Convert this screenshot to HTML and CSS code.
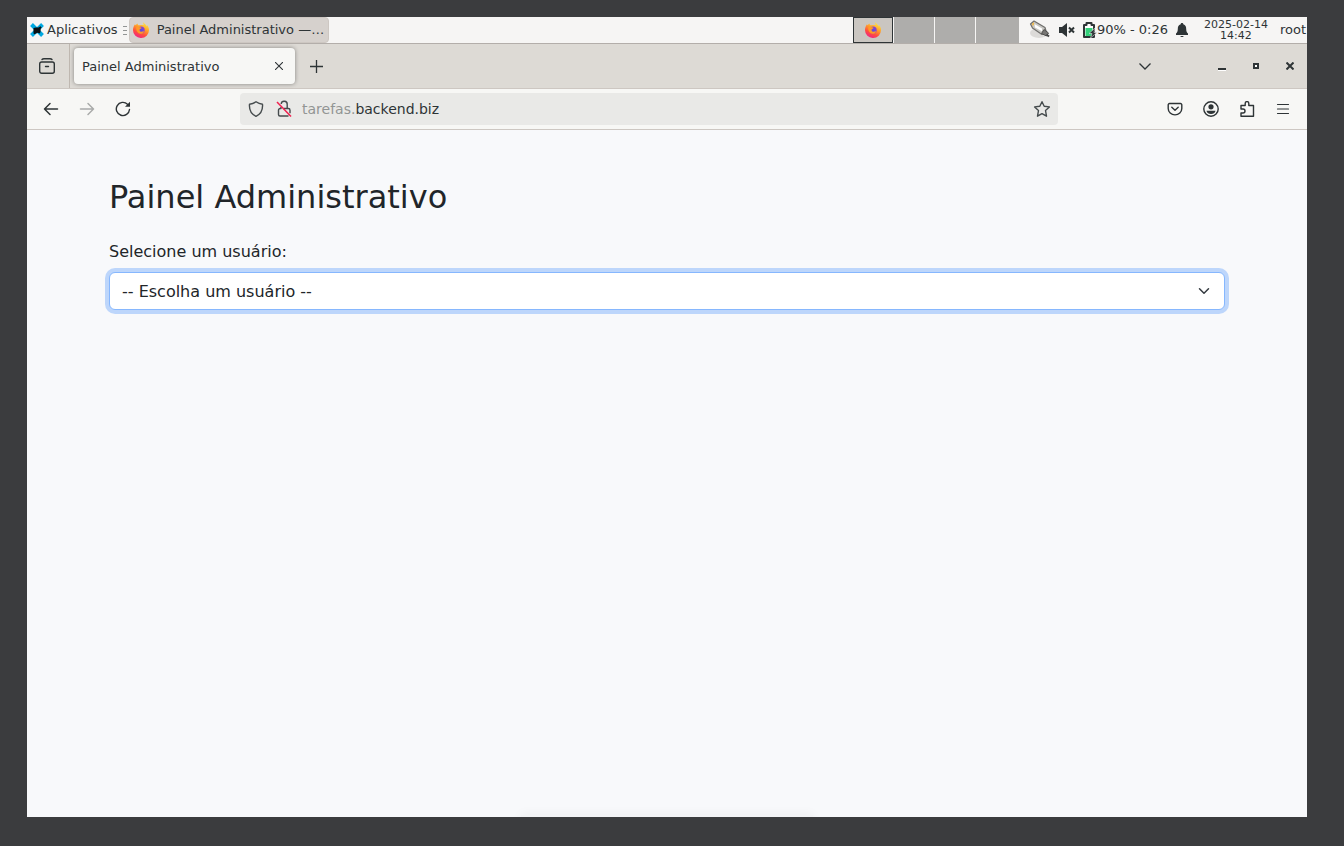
FILE: index.html
```html
<!DOCTYPE html>
<html lang="pt-BR">
<head>
<meta charset="utf-8">
<meta name="viewport" content="width=device-width, initial-scale=1">
<title>Painel Administrativo</title>
<link rel="stylesheet" href="styles.css">
</head>
<body>
<svg class="defs" width="0" height="0" aria-hidden="true">
  <defs>
    <linearGradient id="fx-body" x1="0.8" y1="0" x2="0.3" y2="1">
      <stop offset="0" stop-color="#fff04a"/>
      <stop offset="0.4" stop-color="#ffa02a"/>
      <stop offset="0.7" stop-color="#ff4f3e"/>
      <stop offset="1" stop-color="#f0208a"/>
    </linearGradient>
    <radialGradient id="fx-core">
      <stop offset="0" stop-color="#5b4be0"/>
      <stop offset="1" stop-color="#8f45c8"/>
    </radialGradient>
    <symbol id="firefox" viewBox="0 0 16 16">
      <path fill="url(#fx-body)" d="M10.2.2c-.3 1 .1 1.800 .8 2.500L8 3 5.500 3.300C4.800 3 4.500 2.400 4.500 1.500c-.8.4-1.300 1-1.700 1.700-.4-.2-.7-.5-.8-1C.8 3.800 0 6 0 8.200A7.800 7.800 0 0 0 8 16a7.900 7.900 0 0 0 8-8c0-1.900-.8-3.800-2-4.900.1.500.1.900 0 1.300C13.200 2.700 11.300 1.700 10.200.2z"/>
      <circle cx="8.200" cy="8" r="3.500" fill="url(#fx-core)"/>
      <path fill="#ff9a26" d="M3.200 5.200c1.300-.8 2.600-.6 3.600 0 .8.1 1.500.2 1.700.7-.2.700-1.500.8-1.900 1.500-.3 1.400.7 2.300 2 2.300 1 0 1.700-.5 2.400-.3-.6 1.600-2 2.500-3.600 2.300C4.800 11.400 3 9 3.200 5.200z"/>
    </symbol>
  </defs>
</svg>

<div class="screen">
  <header class="panel">
    <button class="panel-menu" type="button">
      <svg width="14" height="14" viewBox="0 0 14 14" aria-hidden="true"><path d="M1.500 1.500l11 11M12.500 1.500l-11 11" stroke="#00a8e0" stroke-width="4"/><path d="M3.500 5l2.200-.4L8.500 4.500l2-1.200 1.200 1.400-1 .8-.2 3-.5 2-2.500-.8-3 1.500-1-.7z" fill="#0b1013"/></svg>
      <span class="panel-text">Aplicativos</span>
    </button>
    <span class="panel-grip"></span>
    <button class="panel-task" type="button">
      <svg width="16" height="16" aria-hidden="true"><use href="#firefox"/></svg>
      <span class="panel-text">Painel Administrativo —…</span>
    </button>
    <div class="workspaces">
      <button class="workspace workspace-current" type="button" aria-label="Espaço de trabalho 1"><svg width="16" height="16" aria-hidden="true"><use href="#firefox"/></svg></button>
      <button class="workspace" type="button" aria-label="Espaço de trabalho 2"></button>
      <button class="workspace" type="button" aria-label="Espaço de trabalho 3"></button>
      <button class="workspace workspace-last" type="button" aria-label="Espaço de trabalho 4"></button>
    </div>
    <div class="tray">
      <svg width="22" height="20" viewBox="0 0 22 20" aria-hidden="true"><ellipse cx="10" cy="13" rx="9" ry="5" fill="#dcdad8"/><path d="M1.500 4L5 1l11 6.500 1 3.500-4 3.500L3.500 8z" fill="#c9c8c4" stroke="#6f6e6c" stroke-width="1.200" stroke-linejoin="round"/><path d="M5.500 4L13 8.500v2.800L6 7.500z" fill="#fff"/><path d="M3 3.500l2-1.300v2.600L3.500 6z" fill="#efb94c"/><path d="M15 9.500l4.500 3.500-2 3-5-2.500z" fill="#777674" stroke="#4f4e4c"/><path d="M17.500 14.500l2.500 2" stroke="#444" stroke-width="2"/></svg>
      <svg class="tray-sound" width="16" height="16" viewBox="0 0 16 16" aria-hidden="true"><path d="M0 5h3l5-4v14l-5-4H0z" fill="#2e3436"/><path d="M10 5.500l5 5M15 5.500l-5 5" stroke="#2e3436" stroke-width="2"/></svg>
      <svg class="tray-battery" width="14" height="16" viewBox="0 0 14 16" aria-hidden="true"><path d="M1 3h2.500V1h5v2H11v12H1z" fill="#fff" stroke="#2e3436" stroke-width="2" stroke-linejoin="round"/><path d="M2.500 6h7v8h-7z" fill="#33d17a"/><path d="M12 6L6 11.500h3l-1.500 4.500L14 10.500h-3z" fill="#2e3436" stroke="#f6f5f4" stroke-width=".5"/></svg>
      <span class="panel-text tray-power">90% - 0:26</span>
      <svg class="tray-bell" width="12" height="14" viewBox="0 0 12 14" aria-hidden="true"><path d="M6 0c.8 0 1.300.5 1.300 1.200C9.500 1.800 10.200 3.500 10.200 6c0 2.500.6 3.500 1.800 4.500V12H0v-1.500C1.200 9.500 1.800 8.500 1.800 6c0-2.500.7-4.200 2.900-4.800C4.700.5 5.200 0 6 0zM4 13h4l-2 1.500z" fill="#2e3436"/></svg>
      <time class="tray-clock" datetime="2025-02-14T14:42"><span>2025-02-14</span><span>14:42</span></time>
      <span class="panel-text">root</span>
    </div>
  </header>

  <div class="tabbar">
    <button class="tabbar-view" type="button" aria-label="Visão do Firefox"><svg width="16" height="16" viewBox="0 0 16 16" fill="none" stroke="#2e3436" stroke-width="1.400" stroke-linecap="round" aria-hidden="true"><path d="M3 1.500c.5-.6 1-.8 2-.8h6c1 0 1.500.2 2 .8"/><rect x=".7" y="4" width="14.600" height="11.300" rx="2"/><path d="M6.500 8.500h3"/></svg></button>
    <div class="tab">
      <span>Painel Administrativo</span>
      <button type="button" aria-label="Fechar aba"><svg width="8" height="8" viewBox="0 0 8 8" stroke="#2e3436" stroke-width="1.100" aria-hidden="true"><path d="M0 0l8 8M8 0L0 8"/></svg></button>
    </div>
    <button class="tab-new" type="button" aria-label="Nova aba"><svg width="13" height="13" viewBox="0 0 13 13" stroke="#2e3436" stroke-width="1.300" aria-hidden="true"><path d="M6.500 0v13M0 6.500h13"/></svg></button>
    <button class="tabs-all" type="button" aria-label="Listar abas"><svg width="12" height="7" viewBox="0 0 12 7" fill="none" stroke="#2e3436" stroke-width="1.300" aria-hidden="true"><path d="M.5.5L6 6 11.500.5"/></svg></button>
    <div class="window-controls">
      <button type="button" aria-label="Minimizar"><svg width="8" height="9" viewBox="0 0 8 9" aria-hidden="true"><path d="M0 6h8v2H0z" fill="#2e3436"/><path d="M0 8.500h8" stroke="#fff"/></svg></button>
      <button type="button" aria-label="Maximizar"><svg width="6" height="6" viewBox="0 0 6 6" aria-hidden="true"><path d="M1 1h4v4H1z" fill="#fff" stroke="#2e3436" stroke-width="2"/></svg></button>
      <button type="button" aria-label="Fechar"><svg width="8" height="8" viewBox="0 0 8 8" stroke="#2e3436" stroke-width="2" aria-hidden="true"><path d="M.5.5l7 7M7.500.5l-7 7"/></svg></button>
    </div>
  </div>

  <nav class="toolbar" aria-label="Navegação">
    <div class="toolbar-nav">
      <button type="button" aria-label="Voltar"><svg width="16" height="16" viewBox="0 0 16 16" fill="none" stroke="#2e3436" stroke-width="1.500" stroke-linecap="round" stroke-linejoin="round" aria-hidden="true"><path d="M14.500 8h-13M7 2.500L1.500 8 7 13.500"/></svg></button>
      <button type="button" aria-label="Avançar" disabled><svg width="16" height="16" viewBox="0 0 16 16" fill="none" stroke="#a9abaa" stroke-width="1.500" stroke-linecap="round" stroke-linejoin="round" aria-hidden="true"><path d="M1.500 8h13M9 2.500L14.500 8 9 13.500"/></svg></button>
      <button type="button" aria-label="Recarregar"><svg width="16" height="16" viewBox="0 0 16 16" fill="none" stroke="#2e3436" stroke-width="1.400" stroke-linecap="round" aria-hidden="true"><path d="M14.500 8.500A6.600 6.600 0 1 1 12.500 3.200"/><path d="M15 .8v5h-5z" fill="#2e3436" stroke="none"/></svg></button>
    </div>
    <div class="urlbar">
      <svg width="16" height="16" viewBox="0 0 16 16" fill="none" stroke="#454b4d" stroke-width="1.400" stroke-linejoin="round" aria-hidden="true"><path d="M8 .8c2 1.500 4.200 2.300 6.500 2.400.5 6-1.500 9.800-6.500 12.100C3 13 1 9.200 1.500 3.200 3.800 3.100 6 2.300 8 .8z"/></svg>
      <svg class="urlbar-lock" width="16" height="18" viewBox="0 0 16 18" fill="none" stroke="#454b4d" stroke-width="1.400" stroke-linejoin="round" aria-hidden="true"><path d="M5.200 4a3 3 0 0 1 6 .5v4M7.500 8.500h4.800a1.700 1.700 0 0 1 1.700 1.700v3M12.500 16H4a1.500 1.500 0 0 1-1.500-1.500v-4.300a1.700 1.700 0 0 1 1.700-1.700H5V7"/><path d="M1 2l14 14.500" stroke="#f0204e" stroke-width="1.500"/></svg>
      <a class="urlbar-address" href="#"><span class="urlbar-sub">tarefas.</span>backend.biz</a>
      <button type="button" aria-label="Adicionar aos favoritos"><svg width="18" height="18" viewBox="0 0 18 18" fill="none" stroke="#454b4d" stroke-width="1.400" stroke-linejoin="round" aria-hidden="true"><path d="M9 1.700l2.200 4.600 5.200.6-3.900 3.600 1 5.700L9 13.600l-4.500 2.600 1-5.700L1.600 6.900l5.200-.6z"/></svg></button>
    </div>
    <div class="toolbar-actions">
      <button type="button" aria-label="Pocket"><svg width="16" height="16" viewBox="0 0 16 16" fill="none" stroke="#2e3436" stroke-width="1.400" stroke-linecap="round" stroke-linejoin="round" aria-hidden="true"><path d="M2.500 2.500h11a1.300 1.300 0 0 1 1.300 1.300v3.700a6.800 6.400 0 0 1-13.600 0V3.800a1.300 1.300 0 0 1 1.300-1.300z"/><path d="M4.800 6.200L8 9.200l3.200-3"/></svg></button>
      <button type="button" aria-label="Conta"><svg width="16" height="16" viewBox="0 0 16 16" aria-hidden="true"><circle cx="8" cy="8" r="7.200" fill="none" stroke="#2e3436" stroke-width="1.400"/><circle cx="8" cy="5.800" r="2.600" fill="#2e3436"/><path d="M3.500 9.700h9c-.4 2.200-2.200 3.200-4.500 3.200s-4.100-1-4.500-3.200z" fill="#2e3436"/></svg></button>
      <button type="button" aria-label="Extensões"><svg width="16" height="16" viewBox="0 0 16 16" fill="none" stroke="#2e3436" stroke-width="1.400" stroke-linejoin="round" aria-hidden="true"><path d="M2 8V4.500h4.200V2.400a1.700 1.700 0 0 1 3.600 0v2.100H14.500v10.800H2V12h2a2 2 0 0 0 0-4z"/></svg></button>
      <button type="button" aria-label="Menu"><svg width="16" height="16" viewBox="0 0 16 16" stroke="#2e3436" stroke-width="1.200" stroke-linecap="round" aria-hidden="true"><path d="M2.500 3.500h11M2.500 8h11M2.500 12.500h11"/></svg></button>
    </div>
  </nav>

  <main class="page">
    <div class="container">
      <h1>Painel Administrativo</h1>
      <label for="usuario">Selecione um usuário:</label>
      <div class="select-box">
        <select id="usuario">
          <option>-- Escolha um usuário --</option>
        </select>
        <svg width="16" height="16" viewBox="0 0 16 16" fill="none" stroke="#343a40" stroke-width="2" stroke-linecap="round" stroke-linejoin="round" aria-hidden="true"><path d="m2 5 6 6 6-6"/></svg>
      </div>
    </div>
  </main>
</div>
</body>
</html>
```
FILE: styles.css
```css
* {
  box-sizing: border-box;
}

body {
  margin: 0;
  min-height: 100vh;
  display: flex;
  padding: 17px 37px 29px 27px;
  background: #3b3c3e;
  color: #2e3436;
  font-family: "DejaVu Sans", sans-serif;
  font-size: 13px;
}

.defs {
  position: absolute;
}

button {
  display: flex;
  align-items: center;
  justify-content: center;
  margin: 0;
  padding: 0;
  border: 0;
  background: none;
  color: inherit;
  font: inherit;
}

svg {
  flex: none;
  display: block;
}

.screen {
  flex: 1;
  min-width: 0;
  display: flex;
  flex-direction: column;
  overflow: hidden;
  background: #f8f9fb;
}

/* Desktop panel */
.panel {
  display: flex;
  height: 27px;
  background: #f6f5f4;
  border-bottom: 1px solid #b3aeaa;
  white-space: nowrap;
}

.panel-text {
  padding-bottom: 2px;
}

.panel-menu {
  gap: 3px;
  padding-left: 3px;
}

.panel-grip {
  align-self: center;
  width: 4px;
  height: 9px;
  margin: 0 2px 0 5px;
  background: repeating-linear-gradient(#929595 0 1px, transparent 1px 4px);
}

.panel-task {
  width: 200px;
  gap: 8px;
  justify-content: flex-start;
  padding-left: 3px;
  border: 1px solid #cdc7c2;
  border-radius: 4px;
  background: #d6d1cd;
}

.workspaces {
  display: flex;
  gap: 1px;
  margin-left: auto;
}

.workspace {
  width: 40px;
  background: #aeadab;
}

.workspace-current {
  border: 1px solid #2e3436;
  background: #cac6c1;
}

.workspace-last {
  width: 43px;
}

.tray {
  display: flex;
  align-items: center;
  padding: 0 1px 0 10px;
}

.tray-sound,
.tray-battery,
.tray-bell {
  margin-left: 8px;
}

.tray-power {
  width: 71px;
}

.tray-clock {
  display: flex;
  flex-direction: column;
  align-items: center;
  margin: 0 12px 0 16px;
  font-size: 11px;
  line-height: 11px;
}

/* Browser tabs */
.tabbar {
  display: flex;
  align-items: center;
  height: 45px;
  background: #dddad5;
  border-bottom: 1px solid #cdc7c2;
}

.tabbar-view {
  width: 43px;
  height: 100%;
  padding-right: 2px;
  border-right: 1px solid #bfb8b1;
}

.tab {
  display: flex;
  align-items: center;
  justify-content: space-between;
  width: 221px;
  height: 36px;
  margin-left: 4px;
  padding: 0 12px 0 8px;
  border-radius: 4px;
  background: #f7f7f5;
  box-shadow: 0 0 4px rgba(0, 0, 0, 0.4);
}

.tab-new {
  width: 32px;
  height: 32px;
  margin-left: 5px;
}

.tabs-all {
  width: 32px;
  height: 32px;
  margin-left: auto;
}

.window-controls {
  display: flex;
  margin-left: 44px;
}

.window-controls button {
  width: 34px;
  height: 32px;
}

/* Address row */
.toolbar {
  display: flex;
  align-items: center;
  justify-content: space-between;
  height: 41px;
  padding: 0 6px;
  background: #f7f7f5;
  border-bottom: 1px solid #cdc7c2;
}

.toolbar-nav,
.toolbar-actions {
  display: flex;
}

.toolbar-nav button,
.toolbar-actions button {
  width: 36px;
  height: 32px;
}

.urlbar {
  flex: 1;
  display: flex;
  align-items: center;
  height: 32px;
  margin: 0 99px;
  padding: 0 7px 0 8px;
  border-radius: 4px;
  background: #e9e9e7;
  font-size: 14px;
}

.urlbar-lock {
  margin: 0 10px 0 12px;
}

.urlbar-address {
  flex: 1;
  color: #2e3436;
  text-decoration: none;
}

.urlbar-sub {
  color: #929594;
}

/* Page */
.page {
  position: relative;
  flex: 1;
  color: #212529;
  font-size: 16px;
  line-height: 24px;
}

.page::after {
  content: "";
  position: absolute;
  bottom: -8px;
  left: 50%;
  width: 292px;
  height: 10px;
  transform: translateX(-50%);
  background: rgba(0, 0, 0, 0.02);
  box-shadow: 0 0 12px rgba(0, 0, 0, 0.06);
}

.container {
  max-width: 1140px;
  margin: 0 auto;
  padding: 48px 12px;
}

h1 {
  margin: 0 0 24px;
  font-size: 32px;
  font-weight: 400;
  line-height: 38px;
}

label {
  display: block;
  margin-bottom: 8px;
}

.select-box {
  display: grid;
  align-items: center;
}

.select-box > * {
  grid-area: 1 / 1;
}

.select-box svg {
  width: 16px;
  height: 12px;
  margin-right: 13px;
  justify-self: end;
  pointer-events: none;
}

select {
  width: 100%;
  height: 38px;
  padding: 2px 36px 0 12px;
  border: 1px solid #86b7fe;
  border-radius: 6px;
  outline: 0;
  appearance: none;
  background: #fff;
  box-shadow: 0 0 0 4px #bdd6fb;
  color: #212529;
  font: inherit;
}
```
